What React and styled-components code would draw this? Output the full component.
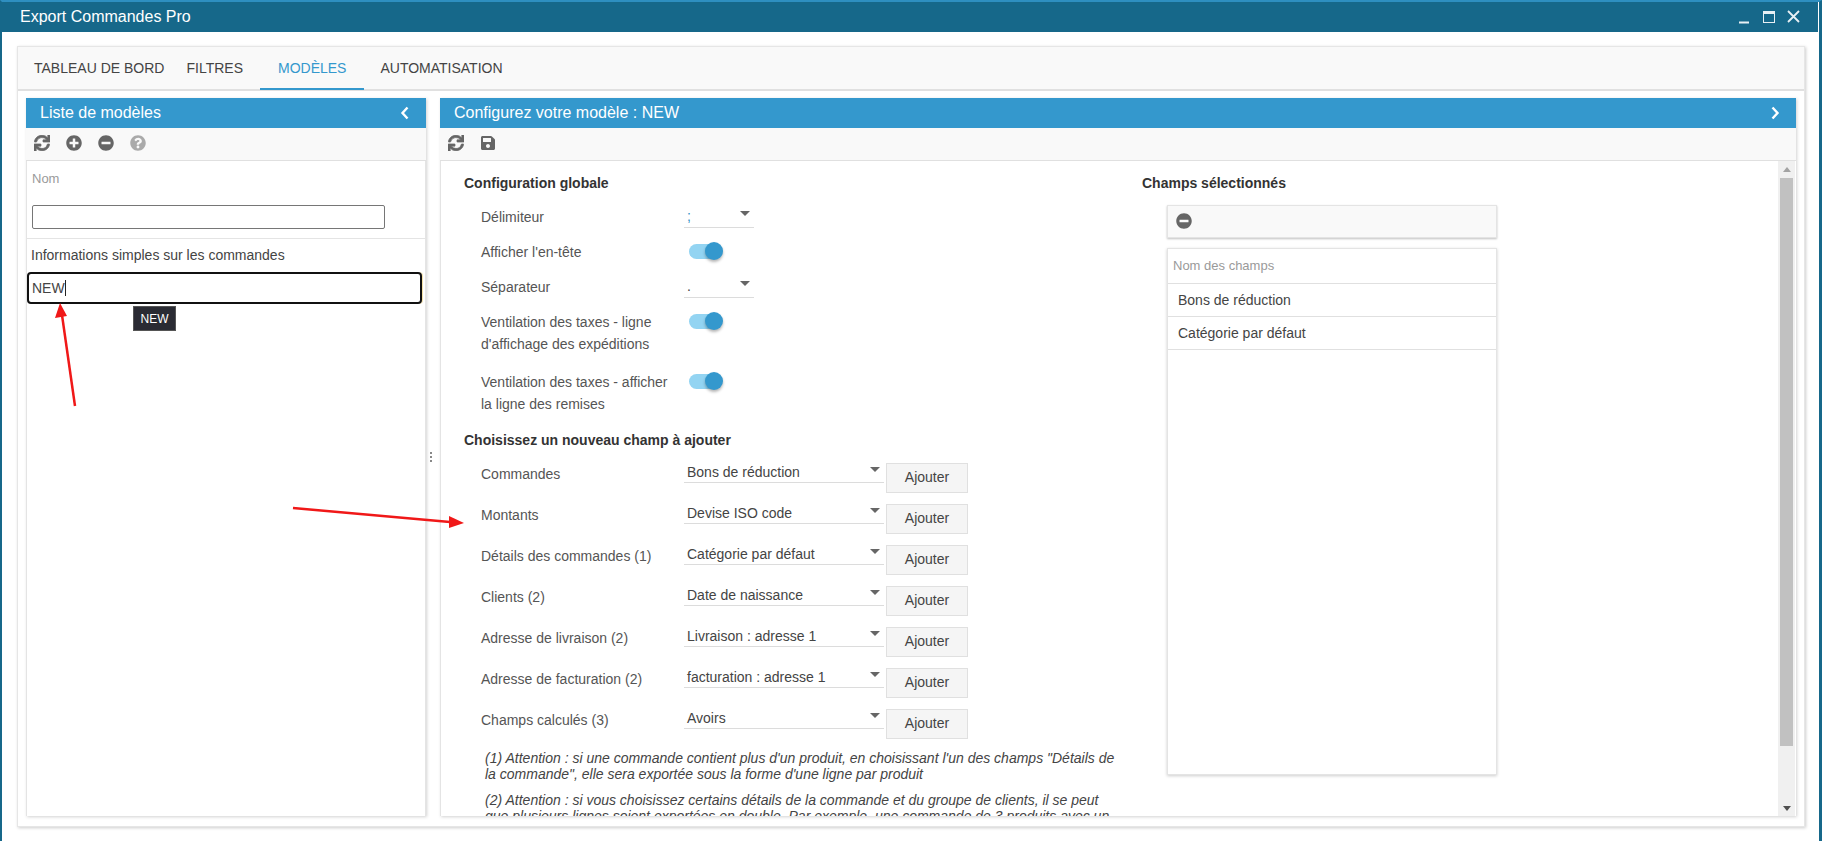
import React from "react";
import styled, { createGlobalStyle } from "styled-components";
import { FaSync, FaPlusCircle, FaMinusCircle, FaQuestionCircle, FaSave } from "react-icons/fa";

const Global = createGlobalStyle`
  html, body { margin: 0; padding: 0; height: 841px; overflow: hidden; background: #fff; }
  * { box-sizing: border-box; }
  body { font-family: "Liberation Sans", Arial, sans-serif; font-size: 14px; color: #444; }
`;

const Win = styled.div`
  position: relative;
  width: 1822px;
  height: 841px;
  display: flex;
  flex-direction: column;
  background: #fff;
  border-top: 2px solid #2e8fc0;
  border-left: 2px solid #16688a;
  border-right: 3px solid #16688a;
  padding-right: 1px;
`;
const TitleBar = styled.div`
  height: 30px;
  flex: none;
  background: #16688a;
  color: #fff;
  display: flex;
  align-items: center;
  justify-content: space-between;
  padding: 0 18px 0 18px;
  font-size: 16px;
`;
const WinButtons = styled.div`
  display: flex;
  align-items: center;
  gap: 12px;
`;
const Card = styled.div`
  margin: 14px 13px 0 15px;
  height: 781px;
  display: flex;
  flex-direction: column;
  border: 1px solid #e6e6e6;
  box-shadow: 1px 1px 3px rgba(0,0,0,.2);
`;
const Tabs = styled.div`
  height: 44px;
  flex: none;
  background: #f9f9f9;
  border-bottom: 2px solid #e0e0e0;
  display: flex;
  padding-left: 6px;
`;
const Tab = styled.div`
  height: 43px;
  padding: 0 ${p => p.$px ?? 9}px;
  margin-left: ${p => p.$ml ?? 0}px;
  display: flex;
  align-items: center;
  font-size: 14px;
  color: ${p => (p.$active ? "#3498cd" : "#444")};
  border-bottom: 2px solid ${p => (p.$active ? "#3498cd" : "transparent")};
`;
const Panels = styled.div`
  flex: 1;
  min-height: 0;
  display: grid;
  grid-template-columns: 400px 1356px;
  column-gap: 14px;
  padding: 7px 0 10px 8px;
  position: relative;
`;
const Panel = styled.div`
  display: flex;
  flex-direction: column;
  min-height: 0;
  box-shadow: 1px 1px 3px rgba(0,0,0,.18);
`;
const PanelHead = styled.div`
  height: 30px;
  flex: none;
  background: #3498cd;
  color: #fff;
  font-size: 16px;
  display: flex;
  align-items: center;
  justify-content: space-between;
  padding: 0 16px 0 14px;
`;
const Toolbar = styled.div`
  height: 33px;
  flex: none;
  background: #f9f9f9;
  display: flex;
  align-items: center;
  gap: 16px;
  padding: 0 8px 2px;
  color: #666;
  font-size: 16px;
  border-bottom: 1px solid #e0e0e0;
`;
const ListBody = styled.div`
  position: relative;
  flex: 1;
  min-height: 0;
  background: #fff;
  border-left: 1px solid #e4e4e4;
  border-right: 1px solid #e4e4e4;
`;
const FilterLabel = styled.div`
  height: 44px;
  padding: 10px 5px 0;
  font-size: 13px;
  color: #9a9a9a;
`;
const FilterZone = styled.div`
  height: 34px;
  padding: 0 5px;
  border-bottom: 1px solid #e4e4e4;
`;
const FilterInput = styled.div`
  width: 353px;
  height: 24px;
  border: 1px solid #767676;
  border-radius: 2px;
`;
const GroupLabel = styled.div`
  height: 33px;
  line-height: 33px;
  padding-left: 4px;
  color: #444;
`;
const Focused = styled.div`
  margin-left: 0;
  width: 395px;
  height: 32px;
  border: 2px solid #111;
  border-radius: 4px;
  display: flex;
  align-items: center;
  padding-left: 3px;
  color: #444;
  box-shadow: 1px 0 0 #f5e2a8;
`;
const Caret = styled.span`
  display: inline-block;
  width: 1px;
  height: 16px;
  background: #222;
`;
const Tip = styled.div`
  position: absolute;
  left: 106px;
  top: 145px;
  width: 43px;
  height: 25px;
  background: #2a2b33;
  border: 1px solid #555;
  color: #fff;
  font-size: 12px;
  display: flex;
  align-items: center;
  justify-content: center;
`;
const ScrollWrap = styled.div`
  position: relative;
  flex: 1;
  min-height: 0;
  background: #fff;
  border-left: 1px solid #e4e4e4;
  display: flex;
  overflow: hidden;
`;
const ScrollContent = styled.div`
  flex: 1;
  min-width: 0;
  overflow: hidden;
  display: grid;
  grid-template-columns: 703px 1fr;
  padding: 12px 0 0 23px;
`;
const Column = styled.div`
  min-width: 0;
`;
const SectionTitle = styled.div`
  height: 20px;
  line-height: 20px;
  font-weight: 700;
  font-size: 14px;
  color: #333;
  margin-top: ${p => p.$mt ?? 0}px;
  margin-bottom: ${p => p.$mb ?? 0}px;
`;
const ConfigRow = styled.div`
  display: grid;
  grid-template-columns: 220px auto;
  padding: 6.5px 0;
  margin-bottom: ${p => p.$mb ?? 0}px;
`;
const Label = styled.div`
  padding: 0 10px 0 17px;
  line-height: 22px;
  color: #555;
`;
const SelectBox = styled.div`
  position: relative;
  width: ${p => p.$w}px;
  height: ${p => p.$h ?? 28}px;
  margin-top: ${p => p.$mt ?? -6}px;
  border-bottom: 1px solid #dcdcdc;
  display: flex;
  align-items: center;
  padding: ${p => p.$pt ?? 0}px 0 2px 3px;
  color: ${p => (p.$blue ? "#2f8fc6" : "#444")};
  &::after {
    content: "";
    position: absolute;
    right: 4px;
    top: ${p => p.$at ?? 10}px;
    border-left: 5px solid transparent;
    border-right: 5px solid transparent;
    border-top: 5px solid #666;
  }
`;
const Toggle = styled.div`
  position: relative;
  width: 30px;
  height: 15px;
  margin: ${p => p.$mt ?? 3}px 0 0 5px;
  border-radius: 8px;
  background: #93d4f2;
  &::after {
    content: "";
    position: absolute;
    right: -4px;
    top: -2px;
    width: 18px;
    height: 18px;
    border-radius: 50%;
    background: #3498cd;
    box-shadow: 0 2px 3px rgba(0,0,0,.3);
  }
`;
const FieldRow = styled.div`
  display: grid;
  grid-template-columns: 220px 200px auto;
  column-gap: 0;
  height: 30px;
  margin-bottom: 11px;
`;
const FieldLabel = styled(Label)`
  padding-top: 0;
  line-height: 22px;
`;
const AddButton = styled.div`
  width: 82px;
  height: 30px;
  margin-left: 2px;
  padding-bottom: 2px;
  background: #f5f5f5;
  border: 1px solid #e0e0e0;
  display: flex;
  align-items: center;
  justify-content: center;
  color: #444;
`;
const Note = styled.p`
  margin: ${p => p.$mt ?? 0}px 0 0 21px;
  width: 635px;
  font-style: italic;
  line-height: 16px;
  color: #444;
`;
const Selected = styled.div`
  padding-left: 25px;
  width: 355px;
  margin-left: -25px;
`;
const SelectedTitle = styled(SectionTitle)`
  margin: 0 0 12px -25px;
`;
const MiniBar = styled.div`
  height: 33px;
  width: 330px;
  background: #f9f9f9;
  border: 1px solid #e4e4e4;
  box-shadow: 0 1px 2px rgba(0,0,0,.25);
  display: flex;
  align-items: center;
  padding: 0 0 2px 8px;
  color: #666;
  font-size: 16px;
`;
const FieldList = styled.div`
  width: 330px;
  height: 527px;
  margin-top: 10px;
  background: #fff;
  border: 1px solid #e4e4e4;
  box-shadow: 0 1px 3px rgba(0,0,0,.2);
`;
const ListHead = styled.div`
  height: 35px;
  line-height: 34px;
  padding-left: 5px;
  font-size: 13px;
  color: #9a9a9a;
  border-bottom: 1px solid #e0e0e0;
`;
const ListRow = styled.div`
  height: 33px;
  line-height: 32px;
  padding-left: 10px;
  color: #444;
  border-bottom: 1px solid #e0e0e0;
`;
const Scrollbar = styled.div`
  flex: none;
  width: 17px;
  margin-right: 1px;
  background: #f0f0f0;
  display: flex;
  flex-direction: column;
  align-items: center;
  padding-top: 17px;
  position: relative;
`;
const Thumb = styled.div`
  width: 13px;
  height: 568px;
  background: #c1c1c1;
`;
const ScrollArrow = styled.span`
  position: absolute;
  left: 5px;
  ${p => (p.$down ? "bottom: 5px;" : "top: 6px;")}
  border-left: 4px solid transparent;
  border-right: 4px solid transparent;
  ${p => (p.$down ? "border-top: 5px solid #505050;" : "border-bottom: 5px solid #a3a3a3;")}
`;
const SplitDots = styled.div`
  position: absolute;
  left: 412px;
  top: 361px;
  width: 2px;
  height: 10px;
  background: repeating-linear-gradient(#888 0 2px, transparent 2px 4px);
`;
const ArrowLayer = styled.svg`
  position: absolute;
  left: -2px;
  top: -2px;
  pointer-events: none;
`;

const IconBtn = styled.span`
  display: inline-flex;
  color: ${p => p.$c ?? "#666"};
`;

const Chevron = ({ left }) => (
  <svg width="10" height="14" viewBox="0 0 10 14" fill="none" stroke="#fff" strokeWidth="2.4">
    <path d={left ? "M7.5 1.5 2.5 7l5 5.5" : "M2.5 1.5 7.5 7l-5 5.5"} />
  </svg>
);

const Refresh = () => <FaSync stroke="currentColor" strokeWidth="24" />;

const fields = [
  ["Commandes", "Bons de réduction"],
  ["Montants", "Devise ISO code"],
  ["Détails des commandes (1)", "Catégorie par défaut"],
  ["Clients (2)", "Date de naissance"],
  ["Adresse de livraison (2)", "Livraison : adresse 1"],
  ["Adresse de facturation (2)", "facturation : adresse 1"],
  ["Champs calculés (3)", "Avoirs"],
];

export default function App() {
  return (
    <>
      <Global />
      <Win>
        <TitleBar>
          Export Commandes Pro
          <WinButtons>
            <svg width="62" height="14" viewBox="0 0 62 14" fill="none" stroke="#e8f0f4">
              <path d="M1 12.5h10" strokeWidth="2" />
              <rect x="25.5" y="1.5" width="11" height="11" strokeWidth="1" />
              <path d="M25 2.5h12" strokeWidth="3" />
              <path d="M50 1l11 11M61 1 50 12" strokeWidth="1.8" />
            </svg>
          </WinButtons>
        </TitleBar>
        <Card>
          <Tabs>
            <Tab $px={10}>TABLEAU DE BORD</Tab>
            <Tab $px={12}>FILTRES</Tab>
            <Tab $active $px={18} $ml={5}>MODÈLES</Tab>
            <Tab $px={16}>AUTOMATISATION</Tab>
          </Tabs>
          <Panels>
            <Panel>
              <PanelHead>
                Liste de modèles
                <Chevron left />
              </PanelHead>
              <Toolbar>
                <Refresh />
                <FaPlusCircle />
                <FaMinusCircle />
                <IconBtn $c="#aaa"><FaQuestionCircle /></IconBtn>
              </Toolbar>
              <ListBody>
                <FilterLabel>Nom</FilterLabel>
                <FilterZone><FilterInput /></FilterZone>
                <GroupLabel>Informations simples sur les commandes</GroupLabel>
                <Focused>NEW<Caret /></Focused>
                <Tip>NEW</Tip>
              </ListBody>
            </Panel>
            <Panel>
              <PanelHead>
                Configurez votre modèle : NEW
                <Chevron />
              </PanelHead>
              <Toolbar>
                <Refresh />
                <FaSave />
              </Toolbar>
              <ScrollWrap>
                <ScrollContent>
                  <Column>
                    <SectionTitle $mb={6}>Configuration globale</SectionTitle>
                    <ConfigRow>
                      <Label>Délimiteur</Label>
                      <SelectBox $w={70} $blue $pt={7} $at={11}>;</SelectBox>
                    </ConfigRow>
                    <ConfigRow>
                      <Label>Afficher l'en-tête</Label>
                      <Toggle />
                    </ConfigRow>
                    <ConfigRow>
                      <Label>Séparateur</Label>
                      <SelectBox $w={70} $pt={7} $at={11}>.</SelectBox>
                    </ConfigRow>
                    <ConfigRow $mb={3}>
                      <Label>Ventilation des taxes - ligne d'affichage des expéditions</Label>
                      <Toggle />
                    </ConfigRow>
                    <ConfigRow>
                      <Label>Ventilation des taxes - afficher la ligne des remises</Label>
                      <Toggle />
                    </ConfigRow>
                    <SectionTitle $mt={9} $mb={13}>Choisissez un nouveau champ à ajouter</SectionTitle>
                    {fields.map(([label, value]) => (
                      <FieldRow key={label}>
                        <FieldLabel>{label}</FieldLabel>
                        <SelectBox $w={200} $h={20} $mt={0} $at={4}>{value}</SelectBox>
                        <AddButton>Ajouter</AddButton>
                      </FieldRow>
                    ))}
                    <Note>(1) Attention : si une commande contient plus d'un produit, en choisissant l'un des champs "Détails de la commande", elle sera exportée sous la forme d'une ligne par produit</Note>
                    <Note $mt={10}>(2) Attention : si vous choisissez certains détails de la commande et du groupe de clients, il se peut que plusieurs lignes soient exportées en double. Par exemple, une commande de 3 produits avec un</Note>
                  </Column>
                  <Column>
                    <Selected>
                      <SelectedTitle>Champs sélectionnés</SelectedTitle>
                      <MiniBar><FaMinusCircle /></MiniBar>
                      <FieldList>
                        <ListHead>Nom des champs</ListHead>
                        <ListRow>Bons de réduction</ListRow>
                        <ListRow>Catégorie par défaut</ListRow>
                      </FieldList>
                    </Selected>
                  </Column>
                </ScrollContent>
                <Scrollbar>
                  <ScrollArrow />
                  <Thumb />
                  <ScrollArrow $down />
                </Scrollbar>
              </ScrollWrap>
            </Panel>
            <SplitDots />
          </Panels>
        </Card>
        <ArrowLayer width="1822" height="841" viewBox="0 0 1822 841">
          <path d="M75 406 62 315" stroke="#f01818" strokeWidth="2.5" fill="none" />
          <path d="M60 303 55 318 67 316Z" fill="#f01818" />
          <path d="M293 508 450 522" stroke="#f01818" strokeWidth="2.5" fill="none" />
          <path d="M464 523 449 516 449 528Z" fill="#f01818" />
        </ArrowLayer>
      </Win>
    </>
  );
}
